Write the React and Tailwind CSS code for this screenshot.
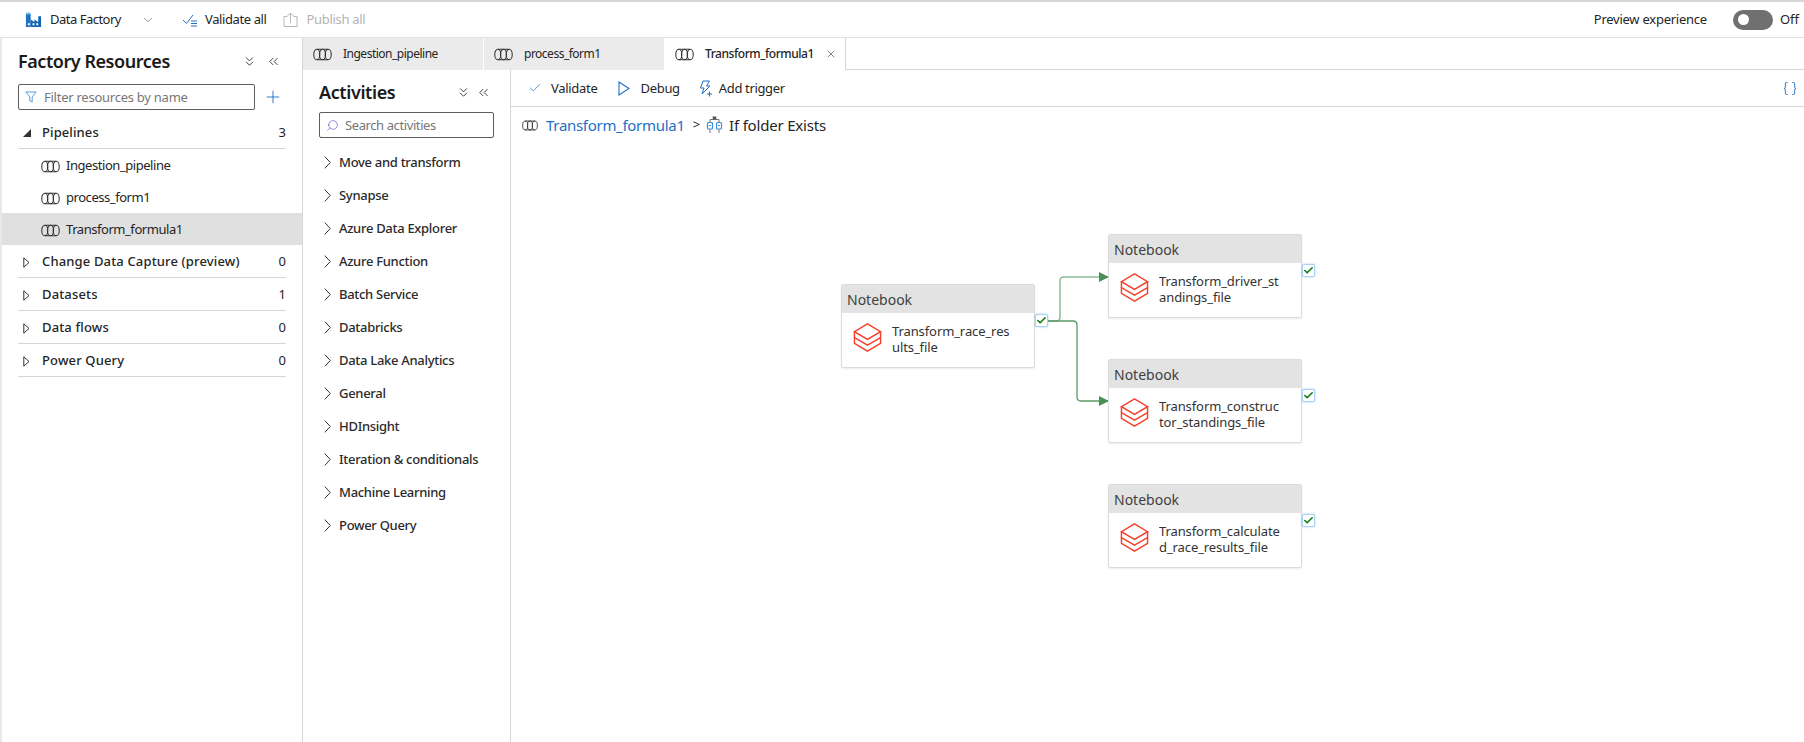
import { ChevronDown, ChevronsDown, ChevronsLeft, Plus, X, Check, Search, Braces } from 'lucide-react'

const fontStack = { fontFamily: '"Noto Sans", "Open Sans", sans-serif' }

const PipelineIcon = ({ className = '' }) => (
  <svg viewBox="0 0 20 13" className={`shrink-0 ${className}`} fill="none" stroke="#333" strokeWidth="1.1">
    <ellipse cx="4" cy="6.5" rx="3.2" ry="5.6" />
    <ellipse cx="16" cy="6.5" rx="3.2" ry="5.6" />
    <ellipse cx="10" cy="6.5" rx="3.2" ry="5.6" />
    <path d="M4 .9h12M4 12.1h12" />
  </svg>
)

const FactoryIcon = () => (
  <svg viewBox="0 0 18 18" className="h-[17px] w-[17px]">
    <path d="M1 3.2C1 2 6 2 6 3.2V17H1z" fill="#1f6fc4" />
    <ellipse cx="3.5" cy="2.8" rx="2.5" ry="1.2" fill="#5cc4ea" />
    <path d="M6 17V9l4 2.6V9l4 2.6V5.5h3V17z" fill="#1565b3" />
    <path d="M3 13h2v2H3zM8 13h2v2H8zM12 13h2v2h-2z" fill="#fff" />
  </svg>
)

const ValidateAllIcon = () => (
  <svg viewBox="0 0 16 14" className="h-[14px] w-[16px]" fill="none" stroke="#1f6fc4" strokeWidth="1">
    <path d="M1 7l3.5 3.5L11 2" />
    <path d="M9 8h6M9 10.5h6M9 13h6" />
  </svg>
)

const PublishIcon = () => (
  <svg viewBox="0 0 15 15" className="h-[15px] w-[15px]" fill="none" stroke="#b8b8b8" strokeWidth="1">
    <path d="M4.5 4.5H1v10h13v-10h-3.500" />
    <path d="M7.500 11V1M4.500 4l3-3 3 3" />
  </svg>
)

const FilterIcon = () => (
  <svg viewBox="0 0 12 12" className="h-[12px] w-[12px]" fill="none" stroke="#5f9bd6" strokeWidth="1">
    <path d="M.8 1h10.400L7.200 6v4.800l-2.400-1V6z" />
  </svg>
)

const TriggerIcon = () => (
  <svg viewBox="0 0 16 17" className="h-[17px] w-[16px]" fill="none" stroke="#1f6fc4" strokeWidth="1">
    <path d="M6 1h6.500L9.500 6H13L5 14l2-6H3.500z" />
    <path d="M12.500 11.500v5M10 14h5" />
  </svg>
)

const PlayIcon = () => (
  <svg viewBox="0 0 12 15" className="h-[15px] w-[12px]" fill="none" stroke="#1f6fc4" strokeWidth="1.100">
    <path d="M1 1l10 6.500L1 14z" />
  </svg>
)

const IfIcon = () => (
  <svg viewBox="0 0 17 18" className="h-[18px] w-[17px]" fill="none">
    <path d="M4 6V3.500h9V6M8.500 3.500V1M4 13v4M13 13v4" stroke="#777" strokeWidth="1" />
    <rect x="6.700" y="0.500" width="3.600" height="3" fill="#555" />
    <rect x="1.500" y="6.500" width="5" height="6.500" rx="1" stroke="#3f8fd8" strokeWidth="1.200" />
    <rect x="10.500" y="6.500" width="5" height="6.500" rx="1" stroke="#3f8fd8" strokeWidth="1.200" />
    <path d="M3 9.500h2M12 9.500h2" stroke="#3f8fd8" />
  </svg>
)

const DatabricksIcon = () => (
  <svg viewBox="0 0 30 30" className="h-[29px] w-[29px] shrink-0" fill="none" stroke="#f5402c" strokeWidth="1.500">
    <path d="M15 1L28.500 9 15 17 1.500 9z" />
    <path d="M1.500 9v6L15 23l13.500-8V9" />
    <path d="M1.500 15v6L15 29l13.500-8v-6" />
  </svg>
)

const ActivityChevron = () => (
  <svg viewBox="0 0 7 13" className="h-[13px] w-[7px] shrink-0" fill="none" stroke="#333" strokeWidth="1">
    <path d="M.8.6l5.500 5.900-5.500 5.900" />
  </svg>
)

const tabs = [
  { name: 'Ingestion_pipeline' },
  { name: 'process_form1' },
  { name: 'Transform_formula1', active: true },
]

const resourceSections = [
  { name: 'Change Data Capture (preview)', count: 0 },
  { name: 'Datasets', count: 1 },
  { name: 'Data flows', count: 0 },
  { name: 'Power Query', count: 0 },
]

const activities = [
  'Move and transform', 'Synapse', 'Azure Data Explorer', 'Azure Function', 'Batch Service', 'Databricks',
  'Data Lake Analytics', 'General', 'HDInsight', 'Iteration & conditionals', 'Machine Learning', 'Power Query',
]

const nodes = [
  { id: 1, lines: ['Transform_race_res', 'ults_file'], left: 330, top: 141 },
  { id: 2, lines: ['Transform_driver_st', 'andings_file'], left: 597, top: 91 },
  { id: 3, lines: ['Transform_construc', 'tor_standings_file'], left: 597, top: 216 },
  { id: 4, lines: ['Transform_calculate', 'd_race_results_file'], left: 597, top: 341 },
]

function NotebookNode({ lines, left, top }) {
  return (
    <div className="absolute" style={{ left, top }}>
      <div className="h-[84px] w-[194px] overflow-hidden rounded-[2px] border border-[#dcdcdc] bg-white shadow-[0_1px_2px_rgba(0,0,0,0.08)]">
        <div className="flex h-[28px] items-center bg-[#e3e3e3] pl-[5px] text-[14px] text-[#404040]">Notebook</div>
        <div className="flex pl-[11px] pt-[10px]">
          <DatabricksIcon />
          <div className="ml-[10px] h-[33px] overflow-hidden text-[13px] leading-[16px] tracking-[-0.1px] whitespace-nowrap text-[#333]">
            {lines.map((l) => <div key={l}>{l}</div>)}
          </div>
        </div>
      </div>
      <div className="absolute left-[194px] top-[30px] flex h-[13px] w-[13px] items-center justify-center rounded-[2px] border border-[#a9d3f5] bg-white shadow-[0_0_2px_rgba(60,140,230,0.5)]">
        <Check className="h-[11px] w-[11px] text-[#107c10]" strokeWidth={3.500} />
      </div>
    </div>
  )
}

export default function App() {
  return (
    <div className="flex h-[742px] w-[1804px] flex-col overflow-hidden bg-white text-[13px] text-[#252525]" style={fontStack}>
      {/* top bar */}
      <div className="flex h-[38px] shrink-0 items-center border-y border-t-2 border-y-[#d6d6d6] border-b-[#e0e0e0] pl-[25px] pr-[5px]">
        <FactoryIcon />
        <span className="ml-[8px] text-[13px] tracking-[-0.5px]">Data Factory</span>
        <ChevronDown className="ml-[20px] h-[14px] w-[14px] text-[#666]" strokeWidth={1.200} />
        <div className="ml-[27px] flex items-center">
          <ValidateAllIcon />
          <span className="ml-[7px] tracking-[-0.4px]">Validate all</span>
        </div>
        <div className="ml-[17px] flex items-center text-[#b4b4b4]">
          <PublishIcon />
          <span className="ml-[8px] tracking-[-0.3px]">Publish all</span>
        </div>
        <span className="ml-auto tracking-[-0.25px]">Preview experience</span>
        <div className="ml-[26px] flex h-[20px] w-[40px] items-center rounded-full bg-[#707070] pl-[5px]">
          <div className="h-[11px] w-[11px] rounded-full bg-white" />
        </div>
        <span className="ml-[7px]">Off</span>
      </div>

      <div className="flex min-h-0 flex-1 border-l-2 border-[#e8e8e8]">
        {/* factory resources */}
        <aside className="w-[301px] shrink-0 border-r border-[#d6d6d6]">
          <div className="flex h-[46px] items-center pl-[16px] pr-[21px]">
            <h1 className="text-[18px] font-semibold tracking-[-0.45px] text-[#1a1a1a]">Factory Resources</h1>
            <ChevronsDown className="ml-auto h-[15px] w-[15px] text-[#333]" strokeWidth={1.500} />
            <ChevronsLeft className="ml-[9px] h-[15px] w-[15px] text-[#333]" strokeWidth={1.500} />
          </div>
          <div className="flex items-center pl-[16px]">
            <div className="flex h-[26px] w-[237px] items-center rounded-[2px] border border-[#605e5c] pl-[6px]">
              <FilterIcon />
              <span className="ml-[7px] pt-[2px] tracking-[-0.25px] text-[#777]">Filter resources by name</span>
            </div>
            <Plus className="ml-[8px] h-[20px] w-[20px] text-[#1f6fc4]" strokeWidth={1.100} />
          </div>

          <div className="mx-[16px] mt-[6px] flex h-[33px] items-center border-b border-[#d6d6d6] pt-[2px]">
            <span className="ml-[5px] h-0 w-0 border-b-[8px] border-l-[8px] border-b-[#333] border-l-transparent" />
            <span className="ml-[11px] font-medium tracking-[0.1px]">Pipelines</span>
            <span className="ml-auto">3</span>
          </div>
          <div>
            {tabs.map((t) => (
              <div key={t.name} className={`flex h-[32px] items-center pl-[39px] pt-[2px] ${t.active ? 'bg-[#e0e0e0]' : ''}`}>
                <PipelineIcon className="h-[13px] w-[19px]" />
                <span className="ml-[6px] tracking-[-0.45px]">{t.name}</span>
              </div>
            ))}
          </div>
          {resourceSections.map((s) => (
            <div key={s.name} className="mx-[16px] flex h-[33px] items-center border-b border-[#d6d6d6] pt-[2px]">
              <svg viewBox="0 0 7 11" className="ml-[5px] h-[11px] w-[7px]" fill="none" stroke="#333"><path d="M.8.8L6 5.500.8 10.200z" /></svg>
              <span className="ml-[12px] font-medium tracking-[0.15px]">{s.name}</span>
              <span className="ml-auto">{s.count}</span>
            </div>
          ))}
        </aside>

        <main className="flex min-w-0 flex-1 flex-col">
          {/* tab strip */}
          <div className="flex h-[32px] shrink-0 border-b border-[#d6d6d6]">
            {tabs.map((t) => (
              <div
                key={t.name}
                className={`flex h-[32px] w-[181px] items-center border-r pl-[10px] text-[12px] ${t.active ? 'border-[#d6d6d6] bg-white font-medium' : 'border-white bg-[#ebebeb]'}`}
              >
                <PipelineIcon className="h-[13px] w-[19px]" />
                <span className={`ml-[11px] ${t.active ? 'tracking-[-0.45px]' : 'tracking-[-0.5px]'}`}>{t.name}</span>
                {t.active && <X className="ml-[11px] h-[12px] w-[12px] shrink-0 text-[#444]" strokeWidth={1.300} />}
              </div>
            ))}
          </div>

          <div className="flex min-h-0 flex-1">
            {/* activities */}
            <section className="w-[208px] shrink-0 border-r border-[#d6d6d6]">
              <div className="flex h-[42px] items-center pl-[16px] pr-[19px] pt-[3px]">
                <h2 className="text-[18px] font-semibold tracking-[-0.4px] text-[#1a1a1a]">Activities</h2>
                <ChevronsDown className="ml-auto h-[15px] w-[15px] text-[#333]" strokeWidth={1.500} />
                <ChevronsLeft className="ml-[5px] h-[15px] w-[15px] text-[#333]" strokeWidth={1.500} />
              </div>
              <div className="ml-[16px] flex h-[26px] w-[175px] items-center rounded-[2px] border border-[#605e5c] pl-[6px]">
                <Search className="h-[13px] w-[13px] -scale-x-100 text-[#6a5fd0]" strokeWidth={1.300} />
                <span className="ml-[6px] pt-[2px] tracking-[-0.4px] text-[#777]">Search activities</span>
              </div>
              <div className="mt-[8px]">
                {activities.map((a) => (
                  <div key={a} className="flex h-[33px] items-center pl-[21px]">
                    <ActivityChevron />
                    <span className="ml-[8px] font-medium tracking-[-0.3px] text-[#2b2b2b]">{a}</span>
                  </div>
                ))}
              </div>
            </section>

            {/* pipeline canvas */}
            <section className="flex min-w-0 flex-1 flex-col">
              <div className="flex h-[37px] shrink-0 items-center border-b border-[#d6d6d6] pl-[17px] pr-[6px]">
                <Check className="h-[14px] w-[14px] text-[#1f6fc4]" strokeWidth={1.300} />
                <span className="ml-[9px] pt-[1px] tracking-[-0.3px]">Validate</span>
                <div className="ml-[21px]"><PlayIcon /></div>
                <span className="ml-[10px] pt-[1px] tracking-[-0.3px]">Debug</span>
                <div className="ml-[17px]"><TriggerIcon /></div>
                <span className="ml-[6px] pt-[1px] tracking-[-0.35px]">Add trigger</span>
                <Braces className="ml-auto h-[17px] w-[16px] text-[#1f6fc4]" strokeWidth={1.400} />
              </div>
              <div className="flex h-[36px] shrink-0 items-center pl-[11px] text-[15px]">
                <PipelineIcon className="h-[11px] w-[16px]" />
                <span className="ml-[8px] tracking-[-0.3px] text-[#1f6fc4]">Transform_formula1</span>
                <span className="ml-[8px] text-[13px]">&gt;</span>
                <span className="ml-[6px]"><IfIcon /></span>
                <span className="ml-[6px] tracking-[-0.2px]">If folder Exists</span>
              </div>
              <div className="relative flex-1">
                <svg className="absolute left-[520px] top-[114px] h-[150px] w-[90px]" viewBox="0 0 90 150" fill="none">
                  <path d="M16 64h9q4 0 4-4V24q0-4 4-4h44" stroke="#8dbb96" strokeWidth="1.500" />
                  <path d="M16 64h26q4 0 4 4v72q0 4 4 4h27" stroke="#5c9a67" strokeWidth="1.300" />
                  <path d="M68 15l10 5-10 5zM68 139l10 5-10 5z" fill="#4a8f55" />
                </svg>
                {nodes.map((n) => <NotebookNode key={n.id} {...n} />)}
              </div>
            </section>
          </div>
        </main>
      </div>
    </div>
  )
}
